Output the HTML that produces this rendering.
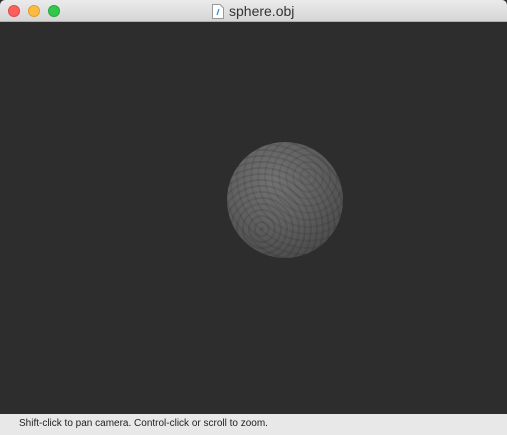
<!DOCTYPE html>
<html><head><style>
*{margin:0;padding:0;box-sizing:border-box}
body{width:507px;height:435px;overflow:hidden;background:#2d2d2d;font-family:"Liberation Sans",sans-serif;position:relative}
.tb{position:absolute;left:0;top:0;width:507px;height:22px;background:linear-gradient(#ebebeb,#d5d5d5);border-bottom:1px solid #b0b0b0;border-radius:5px 5px 0 0}
.dot{position:absolute;top:5px;width:12px;height:12px;border-radius:50%}
.t{position:absolute;top:3px;left:229px;font-size:14px;color:#333}
.sb{position:absolute;left:0;top:414px;width:507px;height:21px;background:#e8e8e8;font-size:10px;color:#222;padding:4px 0 0 19px}
.sp{position:absolute;left:227px;top:142px;width:116px;height:116px;border-radius:50%;
background:
repeating-radial-gradient(circle at 30% 75%,rgba(0,0,0,0.10) 0 2px,rgba(0,0,0,0) 2px 6px),
repeating-radial-gradient(circle at 70% 30%,rgba(0,0,0,0.08) 0 2px,rgba(0,0,0,0) 2px 7px),
radial-gradient(circle at 40% 32%,#727272,#626262 40%,#4e4e4e 75%,#333 95%,#262626 100%)}
</style></head><body>
<div class="tb">
<div class="dot" style="left:8px;background:#fc605c;border:1px solid #de4a45"></div>
<div class="dot" style="left:28px;background:#fdbc40;border:1px solid #de9f34"></div>
<div class="dot" style="left:48px;background:#34c84a;border:1px solid #27a83a"></div>
<svg style="position:absolute;left:212px;top:4px" width="12" height="15" viewBox="0 0 12 15"><path d="M0.5 0.5H8L11.5 4V14.5H0.5Z" fill="#fff" stroke="#999"/><path d="M7 5L5 11" stroke="#2a8ee0" stroke-width="1.2"/></svg>
<div class="t">sphere.obj</div>
</div>
<div class="sp"></div>
<div class="sb">Shift-click to pan camera. Control-click or scroll to zoom.</div>
</body></html>
